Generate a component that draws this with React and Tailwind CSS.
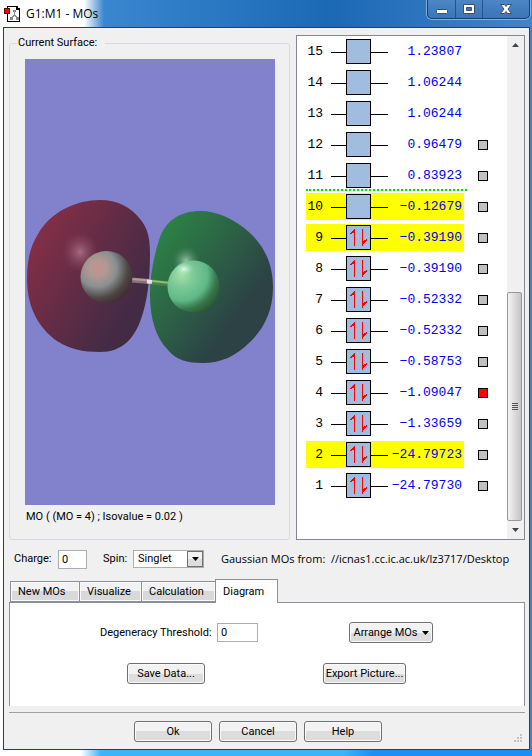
import React, { useState } from "react";

const ORBITALS = [
  { n: 15, energy: "1.23807", pairs: 0 },
  { n: 14, energy: "1.06244", pairs: 0 },
  { n: 13, energy: "1.06244", pairs: 0 },
  { n: 12, energy: "0.96479", pairs: 0, surface: true },
  { n: 11, energy: "0.83923", pairs: 0, surface: true },
  { n: 10, energy: "−0.12679", pairs: 0, surface: true, highlight: true },
  { n: 9, energy: "−0.39190", pairs: 1, surface: true, highlight: true },
  { n: 8, energy: "−0.39190", pairs: 1, surface: true },
  { n: 7, energy: "−0.52332", pairs: 1, surface: true },
  { n: 6, energy: "−0.52332", pairs: 1, surface: true },
  { n: 5, energy: "−0.58753", pairs: 1, surface: true },
  { n: 4, energy: "−1.09047", pairs: 1, surface: true },
  { n: 3, energy: "−1.33659", pairs: 1, surface: true },
  { n: 2, energy: "−24.79723", pairs: 1, surface: true, highlight: true },
  { n: 1, energy: "−24.79730", pairs: 1, surface: true },
];

const TABS = [
  { name: "New MOs", width: "w-[69px]" },
  { name: "Visualize", width: "w-[62px]" },
  { name: "Calculation", width: "w-[74px]" },
  { name: "Diagram", width: "w-[63px]" },
];

const Button = ({ className = "", children }) => (
  <button
    type="button"
    className={`h-[21px] rounded-[3px] border border-[#707070] bg-linear-to-b from-[#f2f2f2] from-50% to-[#dddddd] to-50% leading-4 whitespace-nowrap shadow-[inset_0_0_0_1px_#fafafa] ${className}`}
  >
    {children}
  </button>
);

const DownArrow = () => (
  <svg className="h-1 w-[7px] shrink-0" viewBox="0 0 7 4">
    <path d="M0 0H7L3.500 4z" fill="#000" />
  </svg>
);

const AppIcon = () => (
  <svg className="h-4 w-4" viewBox="0 0 16 16" shapeRendering="crispEdges">
    <path d="M3.5 0.5h9l3 3v12h-12z" fill="#fff" stroke="#000" />
    <path d="M12 0h2v2h2v2h-4z" fill="#000" />
    <path d="M9 4h3v2H9zM10 6h1v3h-1zM9 9h3v1H9zM8 10h2v1H8zM11 10h2v1h-2zM6 11h3v3H6zM12 11h3v3h-3z" fill="#888" />
    <path d="M0.5 2.5h5v5h-5z" fill="#f00" stroke="#600" />
  </svg>
);

// Dotted triangle in the corner of the window
const SizeGrip = () => (
  <svg className="h-[9px] w-[9px]" viewBox="0 0 9 9" shapeRendering="crispEdges">
    <path d="M7 1h2v2H7zM4 4h2v2H4zM7 4h2v2H7zM1 7h2v2H1zM4 7h2v2H4zM7 7h2v2H7z" fill="#c3c3c3" />
  </svg>
);

const TitleBar = () => (
  <header className="flex h-[27px] items-start">
    <div className="flex flex-1 items-center gap-[6px] pt-[5px] pl-px">
      <AppIcon />
      <h1 className="font-['Open_Sans',sans-serif] text-[12px] leading-[18px]">G1:M1 - MOs</h1>
    </div>
    <div className="flex h-[19px] rounded-b-[5px] border border-t-0 border-[#173f70] bg-linear-to-b from-[#4c86c4] to-[#3b75b8] shadow-[0_0_0_1px_#7fb0e0]">
      <button type="button" aria-label="Minimize" className="flex w-[28px] items-center justify-center border-r border-[#24548c]">
        <svg className="h-4 w-4" viewBox="0 0 16 16">
          <rect x="2.5" y="8.5" width="11" height="4" rx="1" fill="#fff" stroke="#3f4d66" />
        </svg>
      </button>
      <button type="button" aria-label="Maximize" className="flex w-[27px] items-center justify-center border-r border-[#24548c]">
        <svg className="h-4 w-4" viewBox="0 0 16 16">
          <path d="M2.5 3.5h11v9h-11z" fill="#fff" stroke="#3f4d66" />
          <path d="M5.5 6.5h5v3h-5z" fill="#3b75b8" stroke="#3f4d66" />
        </svg>
      </button>
      <button type="button" aria-label="Close" className="flex w-[46px] items-center justify-center">
        <svg className="h-4 w-4" viewBox="0 0 16 16">
          <path d="M2.500 3.500h4l1.500 2 1.500-2h4l-3.500 4.500 3.500 4.500h-4l-1.500-2-1.500 2h-4L6 8z" fill="#fff" stroke="#3f4d66" />
        </svg>
      </button>
    </div>
  </header>
);

// Both lobes of the orbital with the two atoms and the bond between them
const Surface = () => (
  <svg className="h-[446px] w-full bg-[#8281cb]" viewBox="0 0 250 446" role="img" aria-label="Orbital surface">
    <defs>
      <linearGradient id="redLobe" x1="0.1" y1="0.15" x2="0.85" y2="0.7">
        <stop offset="0" stopColor="#842f45" />
        <stop offset="0.5" stopColor="#642c45" />
        <stop offset="1" stopColor="#432b45" />
      </linearGradient>
      <linearGradient id="greenLobe" x1="0.1" y1="0.15" x2="0.7" y2="0.7">
        <stop offset="0" stopColor="#2c8045" />
        <stop offset="0.5" stopColor="#2c6245" />
        <stop offset="1" stopColor="#2c4245" />
      </linearGradient>
      <radialGradient id="redShine">
        <stop offset="0" stopColor="#ad7088" stopOpacity="0.9" />
        <stop offset="1" stopColor="#8a4860" stopOpacity="0" />
      </radialGradient>
      <radialGradient id="greenShine">
        <stop offset="0" stopColor="#b5d9c0" stopOpacity="0.8" />
        <stop offset="1" stopColor="#4c8a62" stopOpacity="0" />
      </radialGradient>
      <radialGradient id="atomShine">
        <stop offset="0" stopColor="#e8fff4" stopOpacity="0.9" />
        <stop offset="1" stopColor="#a0e0b8" stopOpacity="0" />
      </radialGradient>
      <radialGradient id="greyAtom" cx="0.33" cy="0.33" r="0.72">
        <stop offset="0" stopColor="#c6928c" />
        <stop offset="0.22" stopColor="#b39894" />
        <stop offset="0.5" stopColor="#899090" />
        <stop offset="0.8" stopColor="#4f4646" />
        <stop offset="1" stopColor="#3f2f33" />
      </radialGradient>
      <radialGradient id="greenAtom" cx="0.28" cy="0.28" r="0.82">
        <stop offset="0" stopColor="#a8dfa8" />
        <stop offset="0.25" stopColor="#80cb98" />
        <stop offset="0.6" stopColor="#5fb888" />
        <stop offset="0.8" stopColor="#37784c" />
        <stop offset="1" stopColor="#28592f" />
      </radialGradient>
    </defs>
    <path
      d="M75 141C52 141 26 152 13 175C5 188 2 202 2 220C2 250 15 270 32 282C44 290 58 293 75 293C97 293 109 280 116 260C122 244 125 222 125 194C125 178 122 168 115 160C106 148 92 141 75 141Z"
      fill="url(#redLobe)"
    />
    <path
      d="M175 152C192 152 210 160 225 174C240 188 248 206 248 228C248 252 239 270 224 284C211 297 196 304 178 304C162 304 151 301 143 291C131 279 125 260 125 236C125 216 129 196 135 178C142 160 157 152 175 152Z"
      fill="url(#greenLobe)"
    />
    <ellipse cx="55" cy="193" rx="18" ry="20" fill="url(#redShine)" />
    <ellipse cx="161" cy="202" rx="14" ry="15" fill="url(#greenShine)" />
    <path d="M106 221L125 222.500" stroke="#8a7078" strokeWidth="5" />
    <path d="M106 220L125 221.500" stroke="#b59aa0" strokeWidth="2" />
    <path d="M122 222.500L128 223" stroke="#e4e4e4" strokeWidth="4" />
    <path d="M127 223L146 225" stroke="#4d8048" strokeWidth="5" />
    <path d="M127 222L146 224" stroke="#8dbb80" strokeWidth="2" />
    <circle cx="81.500" cy="218" r="26" fill="url(#greyAtom)" />
    <circle cx="168.500" cy="227.500" r="26" fill="url(#greenAtom)" />
    <ellipse cx="159" cy="210" rx="10" ry="7" fill="url(#atomShine)" />
  </svg>
);

const OrbitalRow = ({ orbital, selected, onSelect }) => {
  const { n, energy, pairs, surface, highlight } = orbital;
  return (
    <li className="flex h-[31px] items-center">
      <div className={`flex h-[27px] w-[158px] items-center ${highlight ? "bg-[#ffff00]" : ""}`}>
        <span className="w-[17px] text-right">{n}</span>
        <svg className="ml-2 h-[25px] w-[57px] shrink-0" viewBox="0 0 57 25" shapeRendering="crispEdges">
          <path d="M0 13.500H57" stroke="#000" />
          <path d="M15.500 0.500h24v24h-24z" fill="#a0bddf" stroke="#000" />
          {pairs > 0 && (
            <g fill="#f00">
              <path d="M23 4h1v17h-1zM22 5h1v3h-1zM21 6h1v2h-1zM20 7h1v2h-1zM19 8h1v1h-1z" />
              <path d="M31 4h1v17h-1zM32 16h1v3h-1zM33 15h1v3h-1zM34 15h1v2h-1zM35 14h1v2h-1z" />
            </g>
          )}
        </svg>
        <span className="-ml-2 flex-1 pr-[2px] text-right text-[#0000f0]">{energy}</span>
      </div>
      {surface && (
        <button
          type="button"
          aria-label={`Show MO ${n}`}
          onClick={() => onSelect(n)}
          className={`ml-[14px] h-[10px] w-[10px] border border-black ${selected ? "bg-[#ff0000]" : "bg-[#c0c0c0]"}`}
        />
      )}
    </li>
  );
};

const ScrollBar = () => (
  <div className="flex w-[17px] flex-col bg-[#f0f0f0]">
    <button type="button" aria-label="Scroll up" className="flex h-[17px] items-center justify-center">
      <svg className="h-1 w-[7px]" viewBox="0 0 7 4"><path d="M0 4L3.500 0L7 4z" fill="#444" /></svg>
    </button>
    <div className="flex-1" />
    <div className="mr-[2px] flex h-[229px] flex-col items-center justify-center gap-px rounded-[2px] border border-[#979797] bg-linear-to-r from-[#f3f3f3] to-[#c6c6c6]">
      <span className="h-px w-[6px] bg-[#555]" />
      <span className="h-px w-[6px] bg-[#555]" />
      <span className="h-px w-[6px] bg-[#555]" />
      <span className="h-px w-[6px] bg-[#555]" />
    </div>
    <button type="button" aria-label="Scroll down" className="flex h-[18px] items-center justify-center">
      <svg className="h-1 w-[7px]" viewBox="0 0 7 4"><path d="M0 0L3.500 4L7 0z" fill="#444" /></svg>
    </button>
  </div>
);

export default function App() {
  const [selected, setSelected] = useState(4);
  const [tab, setTab] = useState("Diagram");

  return (
    <div className="flex min-h-screen flex-col bg-[linear-gradient(90deg,#fff_0,#fff_84px,#3a86cf_104px,#1b68b5_330px,#4583c8_100%)] pr-[2px] pl-[3px] font-[Roboto,sans-serif] text-[11px] leading-4 text-black">
      <TitleBar />
      <main className="relative flex flex-1 flex-col border border-[#23405f] bg-[#f0f0f0] pt-[7px] pr-1 pl-[5px]">
        <div className="flex gap-[6px]">
          <fieldset className="min-w-0 flex-1 rounded-[3px] border border-[#d0dde6] pr-[14px] pb-[13px] pl-[15px]">
            <legend className="-ml-2 pr-2 pl-px">Current Surface:</legend>
            <div className="pt-2">
              <Surface />
            </div>
            <p className="pt-1 pl-px">MO ( (MO = 4) ; Isovalue = 0.02 )</p>
          </fieldset>

          <div className="flex w-[229px] shrink-0 border border-[#828790] bg-white">
            <ol className="flex-1 pb-[38px] pl-[9px] font-['Liberation_Mono',monospace] text-[13px]">
              {ORBITALS.map((o) => (
                <React.Fragment key={o.n}>
                  <OrbitalRow orbital={o} selected={o.n === selected} onSelect={setSelected} />
                  {o.n === 11 && <li className="-mt-[2px] w-[161px] border-t-2 border-dotted border-[#00e000]" />}
                </React.Fragment>
              ))}
            </ol>
            <ScrollBar />
          </div>
        </div>

        <div className="mt-[9px] flex h-5 items-center pl-[5px]">
          <label htmlFor="charge" className="w-[44px]">Charge:</label>
          <input id="charge" defaultValue="0" className="h-[19px] w-[29px] border border-[#abadb3] bg-white px-[3px]" />
          <label htmlFor="spin" className="ml-4 w-[30px]">Spin:</label>
          <div className="relative">
            <select id="spin" className="block h-[18px] w-[71px] appearance-none border border-[#abadb3] bg-white px-1 leading-4">
              <option>Singlet</option>
            </select>
            <span className="pointer-events-none absolute top-px right-px flex h-4 w-4 items-center justify-center border border-[#707070] bg-linear-to-b from-[#f2f2f2] from-50% to-[#dddddd] to-50%">
              <DownArrow />
            </span>
          </div>
          <p className="ml-[17px] flex-1 font-['Open_Sans',sans-serif] whitespace-pre">
            Gaussian MOs from:  //icnas1.cc.ic.ac.uk/lz3717/Desktop
          </p>
        </div>

        <div role="tablist" className="mt-[10px] flex items-end pl-px">
          {TABS.map(({ name, width }) => (
            <button
              key={name}
              type="button"
              role="tab"
              aria-selected={name === tab}
              onClick={() => setTab(name)}
              className={`pl-[7px] text-left ${width} ${
                name === tab
                  ? "z-10 -mb-px h-6 border border-b-0 border-[#8c8e99] bg-white"
                  : "h-[21px] border border-r-0 border-[#8c8e99] bg-linear-to-b from-[#f2f2f2] from-50% to-[#d9d9d9] to-50% shadow-[inset_0_0_0_1px_#fafafa]"
              }`}
            >
              {name}
            </button>
          ))}
        </div>
        <section className="flex flex-col gap-5 border-x border-t border-[#8c8e99] bg-white pt-[19px] pb-[22px]">
          <div className="flex items-center pl-[90px]">
            <label htmlFor="threshold" className="w-[117px]">Degeneracy Threshold:</label>
            <input id="threshold" defaultValue="0" className="h-[19px] w-[41px] border border-[#abadb3] bg-white px-[3px]" />
            <Button className="ml-[91px] flex w-[84px] items-center justify-center gap-1">
              Arrange MOs
              <DownArrow />
            </Button>
          </div>
          <div className="flex gap-[118px] pl-[117px]">
            <Button className="w-[78px]">Save Data...</Button>
            <Button className="w-[83px]">Export Picture...</Button>
          </div>
        </section>

        <footer className="mt-[6px] flex justify-center gap-[7px] border-t border-[#a0a0a0] pt-2 pr-[18px] pb-[6px]">
          <Button className="w-[78px]">Ok</Button>
          <Button className="w-[78px]">Cancel</Button>
          <Button className="w-[78px]">Help</Button>
        </footer>
        <div className="absolute right-[7px] bottom-[7px]">
          <SizeGrip />
        </div>
      </main>
      <div className="-mr-[2px] h-[6px] bg-[linear-gradient(90deg,#fff_0,#fff_78px,#3cb4fa_98px,#3cb4fa_340px,#1c8ef5_370px)]" />
    </div>
  );
}
